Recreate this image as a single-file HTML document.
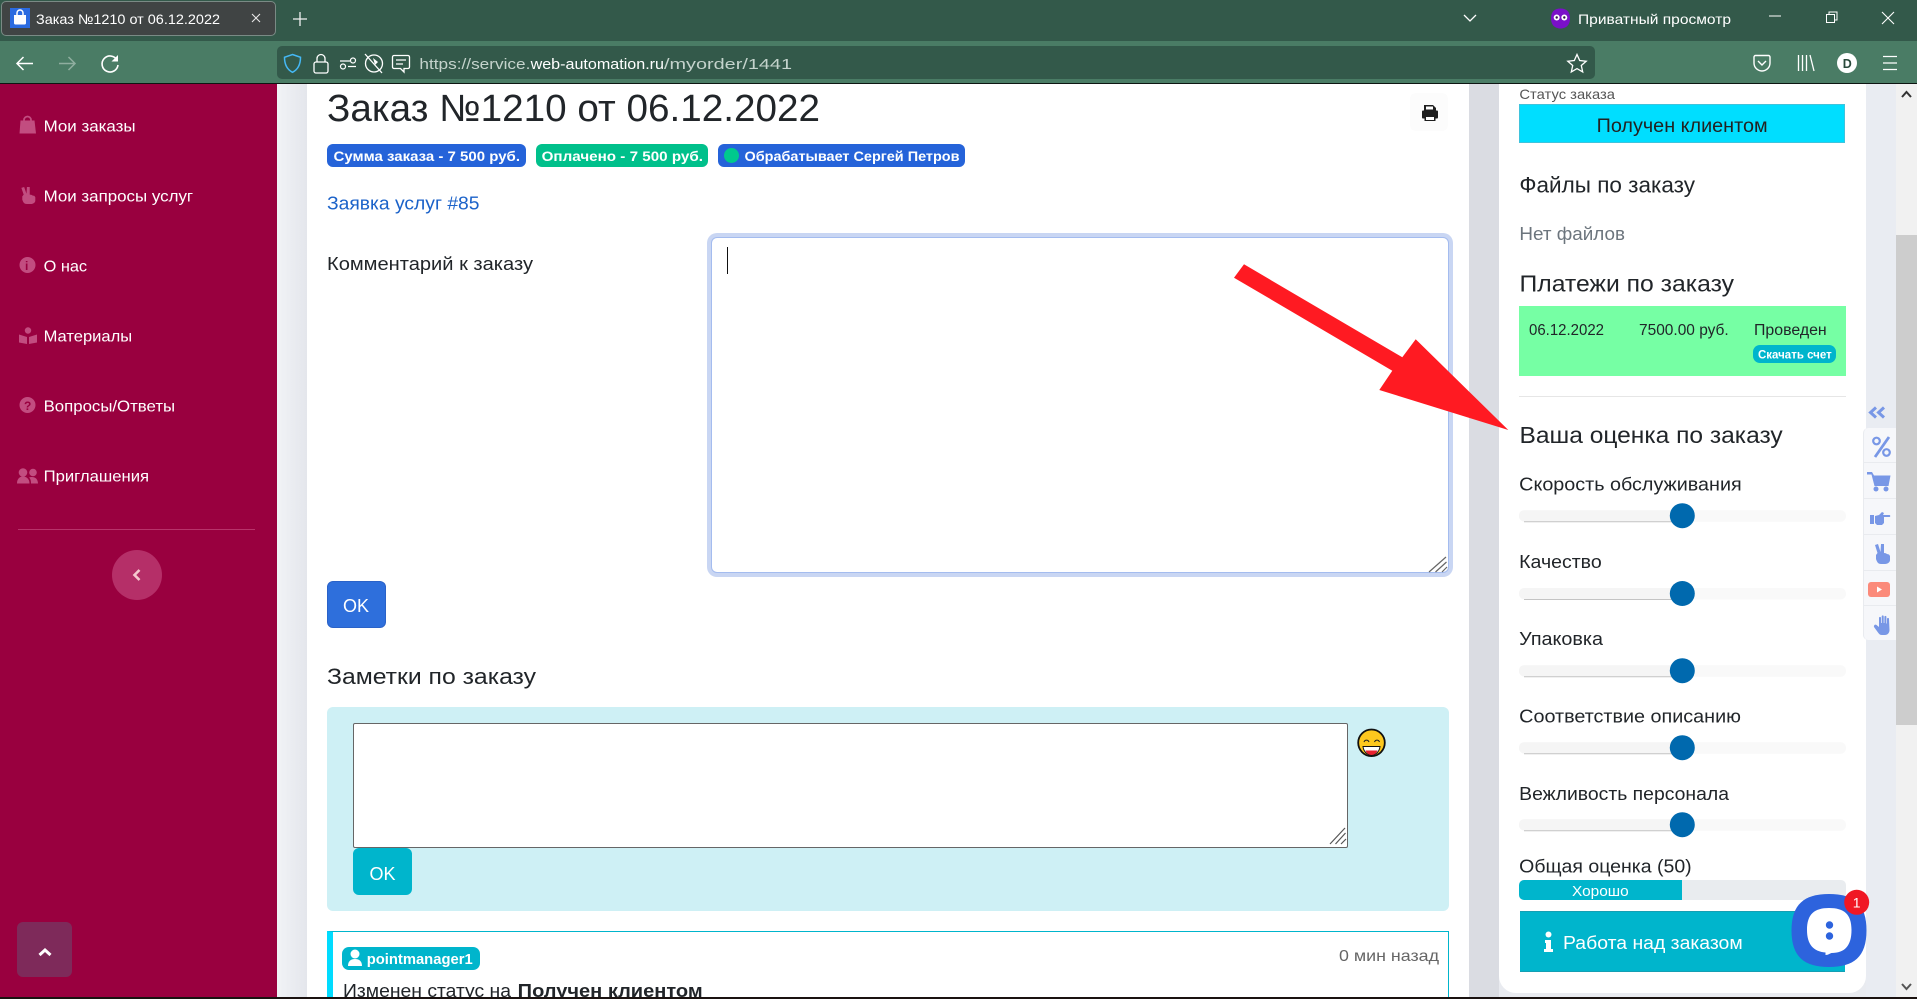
<!DOCTYPE html>
<html lang="ru"><head><meta charset="utf-8"><title>Заказ №1210 от 06.12.2022</title>
<style>
html,body{margin:0;padding:0;width:1917px;height:999px;overflow:hidden;background:#e9ebf0}
body{position:relative;font-family:"Liberation Sans",sans-serif}
.b{position:absolute;box-sizing:border-box}
textarea{position:absolute;box-sizing:border-box;margin:0;padding:0;outline:none;background:#fff;resize:none;font-family:"Liberation Sans",sans-serif}
svg{position:absolute;left:0;top:0}
svg text{font-family:"Liberation Sans",sans-serif}
</style></head><body>
<!-- browser chrome -->
<div class="b" style="left:0;top:0;width:1917px;height:41px;background:#33594a"></div>
<div class="b" style="left:0;top:41px;width:1917px;height:42px;background:#4a7c65"></div>
<div class="b" style="left:1px;top:1px;width:275px;height:35px;background:#404444;border:1px solid #7a8a85;border-radius:5px"></div>
<div class="b" style="left:277px;top:46px;width:1318px;height:33px;background:#33594a;border-radius:5px"></div>
<div class="b" style="left:0;top:83px;width:1917px;height:1px;background:#0d1512"></div>
<!-- page -->
<div class="b" style="left:0;top:84px;width:277px;height:915px;background:#99003f"></div>
<div class="b" style="left:277px;top:84px;width:30px;height:915px;background:linear-gradient(90deg,#f1f3f6,#e4e6ec)"></div>
<div class="b" style="left:307px;top:84px;width:1163px;height:915px;background:#fff"></div>
<div class="b" style="left:1469px;top:84px;width:30px;height:915px;background:#dadce2"></div>
<div class="b" style="left:1866px;top:84px;width:30px;height:915px;background:#e9ecf2"></div>
<div class="b" style="left:1499px;top:84px;width:367px;height:909px;background:#fff;border-radius:0 0 17px 17px"></div>
<div class="b" style="left:1896px;top:84px;width:21px;height:915px;background:#f1f1f1"></div>
<div class="b" style="left:1896px;top:235px;width:21px;height:490px;background:#cdcdcd"></div>
<!-- side panel -->
<div class="b" style="left:1863px;top:428px;width:33px;height:212px;background:#f6f7fa;border-radius:5px 0 0 5px;border-left:1px solid #e9ebef"></div>
<!-- main content boxes -->
<div class="b" style="left:1410px;top:93px;width:38px;height:38px;background:#fcfcfc;border-radius:6px"></div>
<textarea style="left:711px;top:237px;width:738px;height:336px;border:1px solid #a4bcef;border-radius:6px;box-shadow:0 0 0 4px #c9d6f3"></textarea>
<div class="b" style="left:327px;top:581px;width:59px;height:47px;background:#2e6fdc;border:1px solid #2a62c8;border-radius:6px"></div>
<div class="b" style="left:327px;top:707px;width:1122px;height:204px;background:#cef0f5;border-radius:6px"></div>
<textarea style="left:353px;top:723px;width:995px;height:125px;border:1px solid #666;border-radius:2px"></textarea>
<div class="b" style="left:353px;top:848px;width:59px;height:47px;background:#00b5cc;border-radius:6px"></div>
<div class="b" style="left:327px;top:931px;width:1122px;height:68px;background:#fff;border:1px solid #00b5cc;border-bottom:0;border-left:6px solid #00dcff"></div>
<div class="b" style="left:342px;top:947px;width:138px;height:23px;background:#00b5cc;border-radius:7px"></div>
<!-- badges -->
<div class="b" style="left:327px;top:144px;width:199px;height:23px;background:#2563d9;border-radius:6px"></div>
<div class="b" style="left:536px;top:144px;width:172px;height:23px;background:#00c08b;border-radius:6px"></div>
<div class="b" style="left:718px;top:144px;width:247px;height:23px;background:#2563d9;border-radius:6px"></div>
<div class="b" style="left:724px;top:148px;width:15px;height:15px;background:#00c98d;border-radius:50%"></div>
<!-- right card boxes -->
<div class="b" style="left:1519px;top:104px;width:326px;height:39px;background:#00deff;border:1px solid #3fc3dc"></div>
<div class="b" style="left:1519px;top:306px;width:327px;height:70px;background:#76ffa4"></div>
<div class="b" style="left:1753px;top:345px;width:83px;height:18px;background:#00b5cc;border-radius:7px"></div>
<div class="b" style="left:1519px;top:396px;width:327px;height:1px;background:#e6e6e6"></div>
<div class="b" style="left:1519px;top:880px;width:327px;height:20px;background:#e9ecef;border-radius:5px"></div>
<div class="b" style="left:1519px;top:880px;width:163px;height:20px;background:#00b5cc;border-radius:5px 0 0 5px"></div>
<div class="b" style="left:1520px;top:911px;width:325px;height:61px;background:#00b5cc;border-top:1px solid #149fb3;border-bottom:1px solid #149fb3"></div>

<svg width="1917" height="999" viewBox="0 0 1917 999" xmlns="http://www.w3.org/2000/svg">
<defs>
<g id="sl">
<rect x="1519" y="-5.500" width="327" height="11.500" rx="5.500" fill="#f9f9f9"/>
<rect x="1519" y="-5.500" width="163" height="11" rx="5" fill="#f5f5f5"/>
<path d="M1524 6H1682" stroke="#c4c4c4" stroke-width="1"/>
<circle cx="1682.300" cy="0" r="12.500" fill="#0069ae"/>
</g>
<path id="peace" d="M2 1L5 0 7.500 8 8 0h3v9c2 0 3 1 3 1l2 .5 1 1.500v4c0 2-2 4-5 4H8c-3 0-4-2-5-5v-4l1.500-2z"/>
</defs>
<!-- tab -->
<rect x="10" y="8" width="20" height="20" fill="#2b6be0"/>
<path d="M14 15h12v8a1.500 1.500 0 0 1-1.500 1.500h-9A1.500 1.500 0 0 1 14 23z" fill="#fff"/>
<path d="M17 16v-3a3 3 0 0 1 6 0v3" stroke="#fff" stroke-width="1.500" fill="none"/>
<text x="36" y="24" font-size="14" fill="#fff" textLength="184" lengthAdjust="spacingAndGlyphs">Заказ №1210 от 06.12.2022</text>
<path d="M252 14l8 8m0-8l-8 8" stroke="#e8e8e8" stroke-width="1.100"/>
<path d="M293 19h14m-7-7v14" stroke="#f2f2f2" stroke-width="1.300"/>
<path d="M1464 15l6 6 6-6" stroke="#fff" stroke-width="1.300" fill="none"/>
<path d="M1560.500 8.500c6 0 9.500 3 9.500 10s-4.500 10-9.500 10-9.500-3-9.500-10 3.500-10 9.500-10z" fill="#7a10c8"/>
<circle cx="1556.700" cy="17.500" r="3" fill="#fff"/><circle cx="1564.300" cy="17.500" r="3" fill="#fff"/>
<circle cx="1556.700" cy="17.500" r="1.200" fill="#30104a"/><circle cx="1564.300" cy="17.500" r="1.200" fill="#30104a"/>
<text x="1578" y="24" font-size="14" fill="#fff" textLength="153" lengthAdjust="spacingAndGlyphs">Приватный просмотр</text>
<path d="M1769 16h12" stroke="#fff" stroke-width="1"/>
<path d="M1826.500 14.500h8v8h-8zM1829 14.500V12h8v8h-2.500" stroke="#fff" stroke-width="1" fill="none"/>
<path d="M1882 12l12 12m0-12l-12 12" stroke="#fff" stroke-width="1.100"/>
<!-- toolbar -->
<path d="M33 63.500H17m6.500-6.500l-6.500 6.500 6.500 6.500" stroke="#fff" stroke-width="1.500" fill="none"/>
<path d="M59 63.500h16m-6.500-6.500l6.500 6.500-6.500 6.500" stroke="#8fae9f" stroke-width="1.500" fill="none"/>
<path d="M117 60a8 8 0 1 0 1 5" stroke="#fff" stroke-width="1.600" fill="none"/><path d="M118 55v6.500h-6.500z" fill="#fff"/>
<path d="M292.500 54.500l8 2.800c0 7-2 12-8 15-6-3-8-8-8-15z" stroke="#45b8f5" stroke-width="1.500" fill="none"/>
<rect x="314" y="62" width="14" height="11" rx="2" stroke="#fff" stroke-width="1.300" fill="none"/>
<path d="M317 62v-3.500a4 4 0 0 1 8 0V62" stroke="#fff" stroke-width="1.300" fill="none"/>
<path d="M340 61h10M348 66.500h8" stroke="#fff" stroke-width="1.200"/><circle cx="353" cy="60.500" r="2.500" stroke="#fff" stroke-width="1.200" fill="none"/><circle cx="343" cy="66.500" r="2.500" stroke="#fff" stroke-width="1.200" fill="none"/>
<circle cx="374" cy="63.500" r="8.500" stroke="#fff" stroke-width="1.300" fill="none"/><path d="M365 54l17 19" stroke="#fff" stroke-width="1.300"/><path d="M373 58l5 4-3 3z" fill="#fff"/>
<path d="M394 55.500h14a1.500 1.500 0 0 1 1.500 1.500v10a1.500 1.500 0 0 1-1.500 1.500h-4v3.500l-3.500-3.500H394a1.500 1.500 0 0 1-1.500-1.500V57a1.500 1.500 0 0 1 1.500-1.500zM396 60h10m-10 4h7" stroke="#fff" stroke-width="1.300" fill="none"/>
<text x="419.400" y="69" font-size="15" fill="#c4d3cc" textLength="111" lengthAdjust="spacingAndGlyphs">https://service.</text>
<text x="530.600" y="69" font-size="15" fill="#fff" textLength="133.400" lengthAdjust="spacingAndGlyphs">web-automation.ru</text>
<text x="664" y="69" font-size="15" fill="#c4d3cc" textLength="128" lengthAdjust="spacingAndGlyphs">/myorder/1441</text>
<path d="M1577 54.500l2.700 6 6.500.7-4.900 4.300 1.400 6.400-5.700-3.300-5.700 3.300 1.400-6.400-4.900-4.300 6.500-.7z" stroke="#fff" stroke-width="1.300" fill="none"/>
<path d="M1755.500 55.500h13a1.500 1.500 0 0 1 1.500 1.500v6a8 8 0 0 1-16 0v-6a1.500 1.500 0 0 1 1.500-1.500z" stroke="#fff" stroke-width="1.400" fill="none"/><path d="M1758 61l4 4 4-4" stroke="#fff" stroke-width="1.400" fill="none"/>
<path d="M1798.500 55v16M1802.500 55v16M1806.500 55v16M1810 55l4 16" stroke="#fff" stroke-width="1.300" fill="none"/>
<circle cx="1847" cy="63" r="10" fill="#fff"/><text x="1842.800" y="67.800" font-size="12.500" font-weight="700" fill="#2a4a3c">D</text>
<path d="M1883 56.500h14M1883 63h14M1883 69.500h14" stroke="#fff" stroke-width="1.200"/>
<!-- scroll arrows -->
<path d="M1902 97l4.500-5 4.500 5" stroke="#333" stroke-width="2" fill="none"/>
<path d="M1902 984l4.500 5 4.500-5" stroke="#555" stroke-width="2" fill="none"/>
<!-- sidebar -->
<g fill="#c24d80">
<path d="M20.500 120.500h14L36 133.500H19.500z"/><path d="M24 122v-2a3.500 3.500 0 0 1 7 0v2" stroke="#c24d80" stroke-width="1.700" fill="none"/>
<use href="#peace" transform="translate(19.500 187) scale(.93 .85)"/>
<circle cx="27.500" cy="265" r="8"/>
<circle cx="28" cy="330.500" r="3.200"/><path d="M19 334.500l8 2.500v7l-8-1.500zM37 334.500l-8 2.500v7l8-1.500z"/>
<circle cx="27.500" cy="405" r="8"/>
<circle cx="23" cy="472.500" r="4.300"/><circle cx="33" cy="472.500" r="3.800"/><path d="M17 483.500c0-5 3-7 6-7s6.500 2 6.500 7zM31 483.500c0-4-1-5-2-6 4-1.500 9 0 9 6z"/>
</g>
<text x="25" y="270" font-size="12" font-weight="700" fill="#99003f" font-family="Liberation Serif">i</text>
<text x="24" y="410" font-size="12" font-weight="700" fill="#99003f">?</text>
<g font-size="16" fill="#fff">
<text x="43.600" y="131.500" textLength="92" lengthAdjust="spacingAndGlyphs">Мои заказы</text>
<text x="43.600" y="201.500" textLength="149.500" lengthAdjust="spacingAndGlyphs">Мои запросы услуг</text>
<text x="43.600" y="271.500" textLength="43.500" lengthAdjust="spacingAndGlyphs">О нас</text>
<text x="43.600" y="341.500" textLength="88.500" lengthAdjust="spacingAndGlyphs">Материалы</text>
<text x="43.600" y="411.500" textLength="131.500" lengthAdjust="spacingAndGlyphs">Вопросы/Ответы</text>
<text x="43.600" y="481.500" textLength="105.500" lengthAdjust="spacingAndGlyphs">Приглашения</text>
</g>
<path d="M18 529.500h237" stroke="#b8336a" stroke-width="1"/>
<circle cx="137" cy="575" r="25" fill="#b52f68"/>
<path d="M139.500 570l-5 5 5 5" stroke="#f6c9cf" stroke-width="2.600" fill="none"/>
<rect x="17" y="922" width="55" height="55" rx="6" fill="#7e2a5a"/>
<path d="M39.500 955l5.500-5 5.500 5" stroke="#fff" stroke-width="3" fill="none"/>
<!-- main -->
<text x="327" y="121" font-size="38" fill="#212529" textLength="493" lengthAdjust="spacingAndGlyphs">Заказ №1210 от 06.12.2022</text>
<g fill="#1f1f1f"><path d="M1424 105h9l3 3v3h-12z"/><rect x="1422" y="110.500" width="16" height="8" rx="1"/><rect x="1424.500" y="116" width="11" height="5" fill="#1f1f1f"/><rect x="1426" y="117" width="8" height="3" fill="#fff"/><rect x="1426" y="106.500" width="7" height="3" fill="#fff"/></g>
<g font-size="14" font-weight="700" fill="#fff">
<text x="333.500" y="161" textLength="186.500" lengthAdjust="spacingAndGlyphs">Сумма заказа - 7 500 руб.</text>
<text x="541.600" y="161" textLength="161.400" lengthAdjust="spacingAndGlyphs">Оплачено - 7 500 руб.</text>
<text x="744.500" y="161" textLength="215" lengthAdjust="spacingAndGlyphs">Обрабатывает Сергей Петров</text>
</g>
<text x="327" y="209.500" font-size="18" fill="#1b62c9" textLength="152.500" lengthAdjust="spacingAndGlyphs">Заявка услуг #85</text>
<text x="327" y="270" font-size="18" fill="#212529" textLength="206" lengthAdjust="spacingAndGlyphs">Комментарий к заказу</text>
<path d="M727.500 247v27" stroke="#111" stroke-width="1"/>
<path d="M1446 557l-17 15M1446.500 562l-11 10M1447 567l-5 5" stroke="#666" stroke-width="1.200"/>
<text x="356" y="612" font-size="18" fill="#fff" text-anchor="middle">OK</text>
<text x="327" y="684" font-size="22.500" fill="#212529" textLength="209" lengthAdjust="spacingAndGlyphs">Заметки по заказу</text>
<circle cx="1371.500" cy="742.800" r="13.300" fill="#fdc81e" stroke="#111" stroke-width="1.800"/>
<path d="M1363 746.500h17c-.5 5-4 8.500-8.500 8.500s-8-3.500-8.500-8.500z" fill="#fff" stroke="#111" stroke-width="1"/>
<path d="M1365.500 750.500h12c-1 3-3.500 4.500-6 4.500s-5-1.500-6-4.500z" fill="#e8222f"/>
<path d="M1364 742c1-2.500 4-2.500 5 0M1374.500 742c1-2.500 4-2.500 5 0" stroke="#222" stroke-width="1.100" fill="none"/>
<path d="M1345 828l-15 16M1345.500 833l-10 11M1346 839l-5 5" stroke="#555" stroke-width="1.200"/>
<text x="382.500" y="880" font-size="18" fill="#fff" text-anchor="middle">OK</text>
<circle cx="355" cy="954" r="4.500" fill="#fff"/><path d="M348 966c0-5 3-7 7-7s7 2 7 7z" fill="#fff"/>
<text x="366.700" y="964" font-size="15" font-weight="700" fill="#fff" textLength="106" lengthAdjust="spacingAndGlyphs">pointmanager1</text>
<text x="1339" y="961" font-size="16" fill="#666" textLength="100" lengthAdjust="spacingAndGlyphs">0 мин назад</text>
<text x="343" y="997" font-size="18" fill="#212529" textLength="168" lengthAdjust="spacingAndGlyphs">Изменен статус на</text>
<text x="517.700" y="997" font-size="18" font-weight="700" fill="#212529" textLength="185" lengthAdjust="spacingAndGlyphs">Получен клиентом</text>
<!-- right card text -->
<text x="1519.400" y="99" font-size="14" fill="#555" textLength="95.600" lengthAdjust="spacingAndGlyphs">Статус заказа</text>
<text x="1596.600" y="132" font-size="19" fill="#222" textLength="171" lengthAdjust="spacingAndGlyphs">Получен клиентом</text>
<text x="1519.400" y="192.500" font-size="22" fill="#212529" textLength="175.600" lengthAdjust="spacingAndGlyphs">Файлы по заказу</text>
<text x="1519.400" y="240" font-size="18" fill="#6c757d" textLength="105.600" lengthAdjust="spacingAndGlyphs">Нет файлов</text>
<text x="1519.500" y="291.500" font-size="23" fill="#212529" textLength="214.500" lengthAdjust="spacingAndGlyphs">Платежи по заказу</text>
<g font-size="15.500" fill="#212529">
<text x="1529" y="335" textLength="75" lengthAdjust="spacingAndGlyphs">06.12.2022</text>
<text x="1639" y="335" textLength="89.700" lengthAdjust="spacingAndGlyphs">7500.00 руб.</text>
<text x="1754" y="335" textLength="72.700" lengthAdjust="spacingAndGlyphs">Проведен</text>
</g>
<text x="1758" y="358.500" font-size="11.500" font-weight="700" fill="#fff" textLength="73.700" lengthAdjust="spacingAndGlyphs">Скачать счет</text>
<text x="1519.500" y="443" font-size="23" fill="#212529" textLength="263.200" lengthAdjust="spacingAndGlyphs">Ваша оценка по заказу</text>
<g font-size="18" fill="#212529">
<text x="1519.200" y="490.500" textLength="222.500" lengthAdjust="spacingAndGlyphs">Скорость обслуживания</text>
<text x="1519.200" y="568" textLength="82.500" lengthAdjust="spacingAndGlyphs">Качество</text>
<text x="1519.200" y="645" textLength="83.800" lengthAdjust="spacingAndGlyphs">Упаковка</text>
<text x="1519.200" y="722.500" textLength="221.800" lengthAdjust="spacingAndGlyphs">Соответствие описанию</text>
<text x="1519.200" y="800" textLength="209.800" lengthAdjust="spacingAndGlyphs">Вежливость персонала</text>
<text x="1519.200" y="872.500" textLength="172.500" lengthAdjust="spacingAndGlyphs">Общая оценка (50)</text>
</g>
<use href="#sl" y="515.700"/><use href="#sl" y="593.500"/><use href="#sl" y="670.700"/><use href="#sl" y="747.700"/><use href="#sl" y="824.700"/>
<text x="1572" y="896" font-size="14.500" fill="#fff" textLength="56.700" lengthAdjust="spacingAndGlyphs">Хорошо</text>
<g fill="#fff"><circle cx="1548.500" cy="934.500" r="3"/><path d="M1545 940h6v9h2v3h-9v-3h2v-6h-1z"/></g>
<text x="1563" y="949" font-size="18" fill="#fff" textLength="179.700" lengthAdjust="spacingAndGlyphs">Работа над заказом</text>
<!-- side icons -->
<path d="M1876 407.500l-5.500 5 5.500 5M1884 407.500l-5.500 5 5.500 5" stroke="#7897e6" stroke-width="3" fill="none"/>
<g stroke="#e9ebef" stroke-width="1"><path d="M1864 462.500h32M1864 498.500h32M1864 534.500h32M1864 570.500h32M1864 605.500h32"/></g>
<g fill="#7897e6">
<circle cx="1876.500" cy="441" r="3.300" stroke="#7897e6" stroke-width="2.200" fill="none"/><circle cx="1886.500" cy="452.500" r="3.300" stroke="#7897e6" stroke-width="2.200" fill="none"/><path d="M1889 437l-14 20" stroke="#7897e6" stroke-width="2.800"/>
<path d="M1867 472h5l2 3.500h16.500l-2 10.500h-14l-3-11.500h-4.500z"/><circle cx="1876" cy="489" r="2.500"/><circle cx="1886" cy="489" r="2.500"/>
<g transform="translate(1870 512)"><rect x="0" y="3" width="4" height="9"/><path d="M5 4l4-1 3-3 2 1-1 2h6.500c1 0 1 2 0 2H14v6l-2 2H7l-2-2z"/></g>
<use href="#peace" transform="translate(1873 544)"/>
<rect x="1868" y="582" width="22" height="15" rx="3" fill="#fb8a7a"/>
<path d="M1877 586.500v6l5-3z" fill="#fff"/>
<path transform="translate(1874 615)" d="M2.500 10L5 12V3c0-1.500 2-1.500 2 0v5h.7V1.500c0-1.500 2-1.500 2 0V8h.7V2c0-1.500 2-1.500 2 0v6.500h.6V4c0-1.500 2-1.500 2 0l.5 11c0 3-2 5-4.500 5H8c-2 0-3-1-4-2.500L0 12c-.5-2 1.500-3 2.500-2z"/>
</g>
<!-- arrow -->
<path d="M1244 264.300L1234 277.700 1392.300 370.700 1379.300 390 1508.300 430 1415.700 339.300 1402.300 357.300z" fill="#ff1a22"/>
<!-- chat -->
<path d="M1829 894c25 0 37.500 10 37.500 36.500s-13 36.500-37.500 36.500-37.500-10-37.500-36.500 13-36.500 37.500-36.500z" fill="#2d63dd"/>
<path d="M1829 908c15 0 22.500 6 22.500 22s-7 23-20 23c-1 0-3 2-6 2v-2.500c-12-1-18.500-8-18.500-22.500 0-16 7.500-22 22-22z" fill="#fff"/>
<circle cx="1829.500" cy="925" r="3.700" fill="#2d63dd"/><circle cx="1829.500" cy="936" r="3.700" fill="#2d63dd"/>
<circle cx="1856.700" cy="902.300" r="12.500" fill="#f01724"/>
<text x="1856.700" y="907.500" font-size="14" fill="#fff" text-anchor="middle">1</text>
<!-- bottom edge -->
<rect x="0" y="997" width="1917" height="2" fill="#1a1210"/>
</svg>
</body></html>
